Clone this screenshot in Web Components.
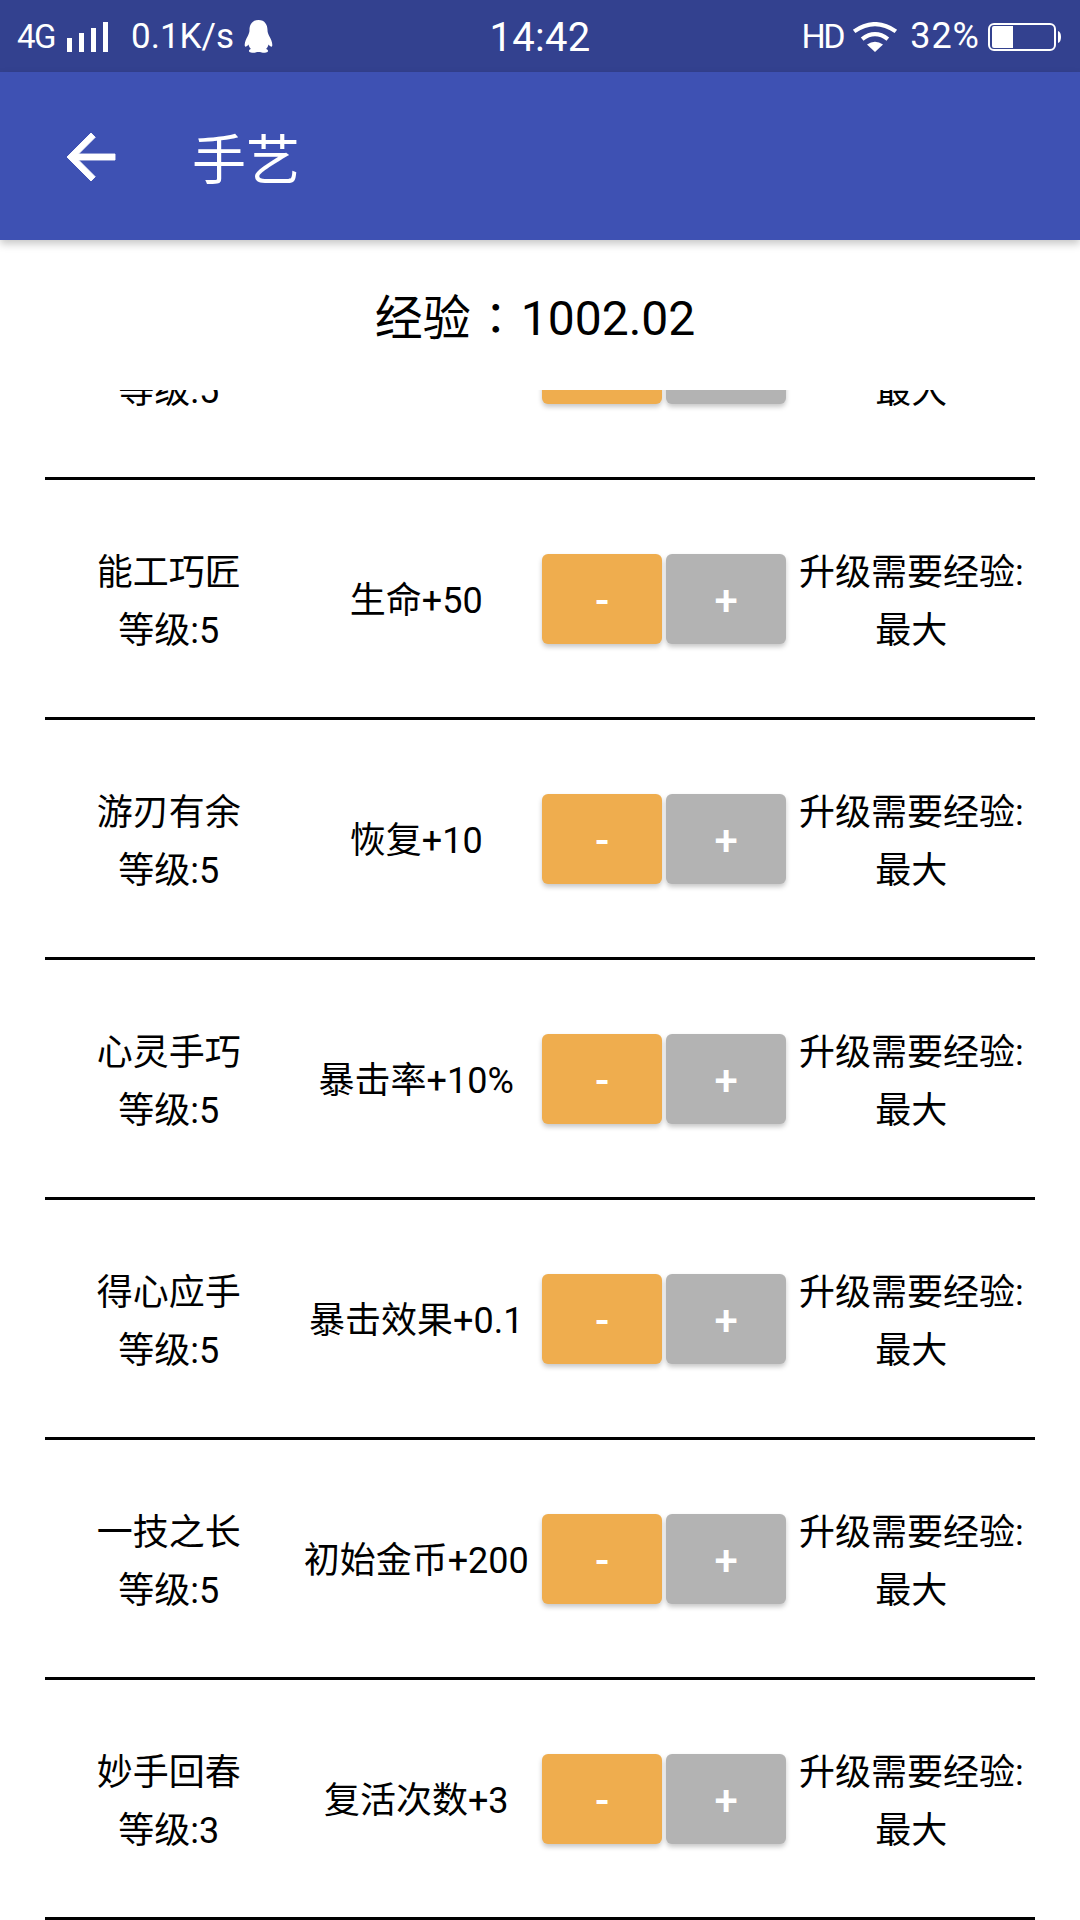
<!DOCTYPE html>
<html lang="zh-CN">
<head>
<meta charset="utf-8">
<title>手艺</title>
<style>
  html, body {
    margin: 0;
    width: 1080px;
    height: 1920px;
    overflow: hidden;
    background: #fff;
    color: #000;
    font-family: Roboto, "Noto Sans CJK SC", sans-serif;
  }
  body { display: flex; flex-direction: column; }
  .tc { font-family: "Noto Sans CJK TC", sans-serif; font-size: 44px; display: inline-block; width: 50px; text-align: center; line-height: 1; }
</style>
</head>
<body>
<status-bar></status-bar>
<app-bar>手艺</app-bar>
<exp-header><span>经验<span class="tc" lang="zh-TW">：</span>1002.02</span></exp-header>
<craft-list>
  <craft-row><span slot="name">精打细算</span><span slot="level">等级:5</span><span slot="effect">攻击+5</span><span slot="need">升级需要经验:</span><span slot="cost">最大</span></craft-row>
  <craft-row><span slot="name">能工巧匠</span><span slot="level">等级:5</span><span slot="effect">生命+50</span><span slot="need">升级需要经验:</span><span slot="cost">最大</span></craft-row>
  <craft-row><span slot="name">游刃有余</span><span slot="level">等级:5</span><span slot="effect">恢复+10</span><span slot="need">升级需要经验:</span><span slot="cost">最大</span></craft-row>
  <craft-row><span slot="name">心灵手巧</span><span slot="level">等级:5</span><span slot="effect">暴击率+10%</span><span slot="need">升级需要经验:</span><span slot="cost">最大</span></craft-row>
  <craft-row><span slot="name">得心应手</span><span slot="level">等级:5</span><span slot="effect">暴击效果+0.1</span><span slot="need">升级需要经验:</span><span slot="cost">最大</span></craft-row>
  <craft-row><span slot="name">一技之长</span><span slot="level">等级:5</span><span slot="effect">初始金币+200</span><span slot="need">升级需要经验:</span><span slot="cost">最大</span></craft-row>
  <craft-row><span slot="name">妙手回春</span><span slot="level">等级:3</span><span slot="effect">复活次数+3</span><span slot="need">升级需要经验:</span><span slot="cost">最大</span></craft-row>
</craft-list>

<template id="status-bar-template">
  <style>
    :host {
      display: grid;
      grid-template-columns: 1fr auto 1fr;
      align-items: center;
      height: 72px;
      flex: none;
      background: #33418f;
      color: #fff;
      font-family: Roboto, sans-serif;
    }
    .left, .right { display: flex; align-items: center; height: 72px; }
    .left { padding-left: 17px; }
    .right { justify-content: flex-end; padding-right: 19px; }
    svg { display: block; fill: #fff; flex: none; }
    .net { font-size: 33px; letter-spacing: -1.5px; }
    .signal { margin-left: 12px; margin-top: 1px; }
    .speed { font-size: 35px; margin-left: 23px; letter-spacing: 0; }
    .qq { margin-left: 10px; margin-top: 1px; }
    .time { font-size: 40px; margin-top: 3px; letter-spacing: .3px; }
    .hd { font-size: 34px; letter-spacing: -2.5px; }
    .wifi { margin-left: 9px; margin-top: 1px; }
    .pct { font-size: 36px; margin-left: 12px; letter-spacing: 1px; }
    .battery { margin-left: 8px; margin-top: 1px; }
  </style>
  <div class="left">
    <span class="net">4G</span>
    <svg class="signal" width="41" height="30" viewBox="0 0 41 30">
      <rect x="0" y="16" width="5" height="14"/>
      <rect x="12" y="11" width="5" height="19"/>
      <rect x="24" y="6" width="5" height="24"/>
      <rect x="36" y="0" width="5" height="30"/>
    </svg>
    <span class="speed">0.1K/s</span>
    <svg class="qq" width="29" height="33" viewBox="0 0 29 33">
      <path d="M14.5 0C8 0 5.5 5 5.5 10c0 2-.5 3.5-1.7 6C1.800 19.500.3 23 .8 26c.4 1.500 2.200.5 3.700-1.500.5 2 1.500 3.500 2.500 4.500-2 .5-2.500 2-1.500 3 1.500 1 5.500 1 7.500 0h3c2 1 6 1 7.500 0 1-1 .5-2.500-1.500-3 1-1 2-2.500 2.500-4.500 1.500 2 3.300 3 3.700 1.500.5-3-1-6.500-3-10-1.200-2.500-1.700-4-1.700-6C23.500 5 21 0 14.500 0z"/>
    </svg>
  </div>
  <span class="time">14:42</span>
  <div class="right">
    <span class="hd">HD</span>
    <svg class="wifi" width="46" height="30" viewBox="0 0 43 29" preserveAspectRatio="none">
      <path d="M2 9Q21.500-5 41 9" fill="none" stroke="#fff" stroke-width="4"/>
      <path d="M9.500 16.500Q21.500 7 33.500 16.500" fill="none" stroke="#fff" stroke-width="4"/>
      <path d="M21.500 29l-7.500-7.200q7.500-5.300 15 0z"/>
    </svg>
    <span class="pct">32%</span>
    <svg class="battery" width="73" height="28" viewBox="0 0 73 28">
      <rect x="1" y="1" width="66" height="26" rx="5" fill="none" stroke="#fff" stroke-width="2"/>
      <path d="M4 5q0-2 2-2h19v22H6q-2 0-2-2z"/>
      <path d="M70 8q3 1 3 6t-3 6z"/>
    </svg>
  </div>
</template>

<template id="app-bar-template">
  <style>
    :host {
      display: flex;
      align-items: center;
      flex: none;
      height: 168px;
      padding-left: 55px;
      background: #3e51b3;
      color: #fff;
      font-size: 54px;
      position: relative;
      z-index: 1;
      box-shadow: 0 4px 8px rgba(0, 0, 0, .22);
    }
    svg { display: block; fill: #fff; stroke: #fff; stroke-width: .3; flex: none; margin-top: 1px; }
    .title { margin-left: 65px; margin-top: 1px; }
  </style>
  <svg width="72" height="72" viewBox="0 0 24 24">
    <path d="M20 11H7.830l5.590-5.590L12 4l-8 8 8 8 1.410-1.410L7.830 13H20v-2z"/>
  </svg>
  <span class="title"><slot></slot></span>
</template>

<template id="exp-header-template">
  <style>
    :host {
      display: flex;
      align-items: center;
      justify-content: center;
      flex: none;
      height: 150px;
      box-sizing: border-box;
      padding: 0 10px 3px 0;
      font-size: 48px;
    }
  </style>
  <slot></slot>
</template>

<template id="craft-list-template">
  <style>
    :host {
      display: block;
      flex: 1;
      min-height: 0;
      overflow: hidden;
      padding: 0 45px;
    }
    /* list is scrolled by 150px */
    .inner { margin-top: -150px; }
  </style>
  <div class="inner"><slot></slot></div>
</template>

<template id="craft-row-template">
  <style>
    :host {
      display: grid;
      grid-template-columns: repeat(4, 1fr);
      align-items: center;
      height: 240px;
      box-sizing: border-box;
      border-bottom: 3px solid #000;
      font-size: 36px;
      line-height: 58px;
      text-align: center;
      white-space: nowrap;
    }
    .cell { display: flex; flex-direction: column; align-items: center; padding-top: 7px; }
    .effect { padding-top: 5px; }
    .buttons { display: flex; justify-content: center; gap: 4px; }
  </style>
  <div class="cell"><slot name="name"></slot><slot name="level"></slot></div>
  <div class="cell effect"><slot name="effect"></slot></div>
  <div class="buttons">
    <step-button kind="minus">-</step-button>
    <step-button kind="plus">+</step-button>
  </div>
  <div class="cell"><slot name="need"></slot><slot name="cost"></slot></div>
</template>

<template id="step-button-template">
  <style>
    :host {
      display: flex;
      align-items: center;
      justify-content: center;
      width: 120px;
      height: 90px;
      box-sizing: border-box;
      padding: 5px 0 0 1px;
      border-radius: 6px;
      background: #b3b3b3;
      color: #fff;
      font-family: Roboto, sans-serif;
      font-size: 42px;
      font-weight: 500;
      line-height: 1;
      box-shadow: 0 3px 5px rgba(0, 0, 0, .22);
    }
    :host([kind="minus"]) { background: #efad4e; }
  </style>
  <slot></slot>
</template>

<script>
  const simple = (tagName, templateId) => {
    const template = document.getElementById(templateId);
    customElements.define(tagName, class extends HTMLElement {
      constructor() {
        super();
        this.attachShadow({ mode: 'open' });
        this.shadowRoot.appendChild(template.content.cloneNode(true));
      }
    });
  };

  // leaf elements first, rows clone step-button from their template
  simple('step-button', 'step-button-template');
  simple('craft-row', 'craft-row-template');
  simple('craft-list', 'craft-list-template');
  simple('exp-header', 'exp-header-template');
  simple('app-bar', 'app-bar-template');
  simple('status-bar', 'status-bar-template');
</script>
</body>
</html>
